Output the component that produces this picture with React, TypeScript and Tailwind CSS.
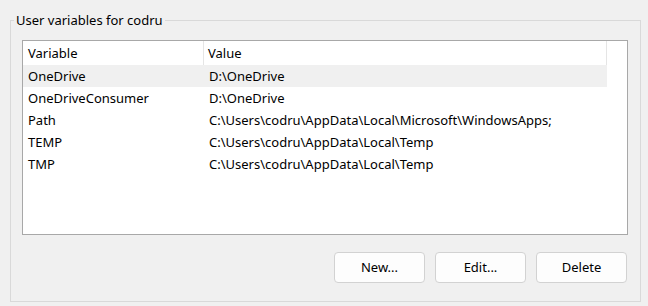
const rows = [
  { name: 'OneDrive', value: 'D:\\OneDrive', selected: true },
  { name: 'OneDriveConsumer', value: 'D:\\OneDrive' },
  { name: 'Path', value: 'C:\\Users\\codru\\AppData\\Local\\Microsoft\\WindowsApps;' },
  { name: 'TEMP', value: 'C:\\Users\\codru\\AppData\\Local\\Temp' },
  { name: 'TMP', value: 'C:\\Users\\codru\\AppData\\Local\\Temp' },
];

function Button({ label }: { label: string }) {
  return (
    <button className="h-[31px] w-[91px] rounded-[4px] border border-[#d2d2d2] bg-[#fdfdfd] text-[13px] text-black">
      {label}
    </button>
  );
}

export default function App() {
  return (
    <div
      className="h-[306px] w-[648px] overflow-hidden bg-[#f0f0f0] pt-[11px] text-[13px] text-black"
      style={{ fontFamily: '"Noto Sans", "Open Sans", sans-serif' }}
    >
      <fieldset className="ml-[10px] w-[631px] border border-[#d9d9d9] pb-[18px] pl-[11px] pr-[12px]">
        <legend className="-ml-[8px] px-[2px] leading-[18px]">User variables for codru</legend>

        <div className="mt-[11px] h-[195px] border border-[#a8a8a8] bg-white">
          <div className="w-[584px]">
            <div className="flex h-[24px] items-center">
              <div className="h-full w-[181px] border-r border-[#e5e5e5] pl-[5px] leading-[25px]">Variable</div>
              <div className="h-full flex-1 border-r border-[#e5e5e5] pl-[4px] leading-[25px]">Value</div>
            </div>
            {rows.map((r) => (
              <div
                key={r.name}
                className={`flex h-[22px] leading-[23px] ${r.selected ? 'bg-[#f0f0f0]' : ''}`}
              >
                <div className="w-[181px] pl-[5px]">{r.name}</div>
                <div className="flex-1 pl-[5px]">{r.value}</div>
              </div>
            ))}
          </div>
        </div>

        <div className="mr-[1px] mt-[17px] flex justify-end gap-[10px]">
          <Button label="New..." />
          <Button label="Edit..." />
          <Button label="Delete" />
        </div>
      </fieldset>
    </div>
  );
}
